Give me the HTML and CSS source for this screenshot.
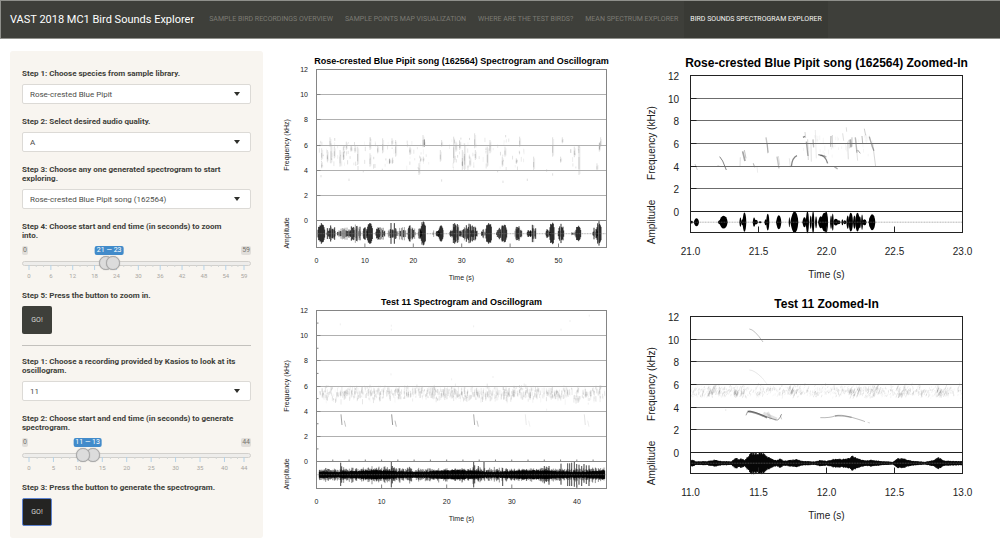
FILE: index.html
```html
<!DOCTYPE html>
<html lang="en">
<head>
<meta charset="utf-8">
<title>VAST 2018 MC1 Bird Sounds Explorer</title>
<link rel="stylesheet" href="styles.css">
</head>
<body>
<header class="navbar">
  <a class="brand" href="#">VAST 2018 MC1 Bird Sounds Explorer</a>
  <nav class="tabs">
    <a href="#">SAMPLE BIRD RECORDINGS OVERVIEW</a>
    <a href="#">SAMPLE POINTS MAP VISUALIZATION</a>
    <a href="#">WHERE ARE THE TEST BIRDS?</a>
    <a href="#">MEAN SPECTRUM EXPLORER</a>
    <a href="#" class="active">BIRD SOUNDS SPECTROGRAM EXPLORER</a>
  </nav>
</header>
<main class="layout">
  <form class="panel">
    <div class="field">
      <label for="species">Step 1: Choose species from sample library.</label>
      <div class="select"><select id="species"><option>Rose-crested Blue Pipit</option></select></div>
    </div>
    <div class="field">
      <label for="quality">Step 2: Select desired audio quality.</label>
      <div class="select"><select id="quality"><option>A</option></select></div>
    </div>
    <div class="field">
      <label for="song">Step 3: Choose any one generated spectrogram to start exploring.</label>
      <div class="select"><select id="song"><option>Rose-crested Blue Pipit song (162564)</option></select></div>
    </div>
    <div class="field">
      <label for="zoom-start">Step 4: Choose start and end time (in seconds) to zoom<br>into.</label>
      <div class="slider" data-max="59" data-step="6">
        <div class="chips"><span class="chip">0</span><output class="value">21 — 23</output><span class="chip">59</span></div>
        <div class="track"></div>
        <svg class="scale" aria-hidden="true"></svg>
        <input id="zoom-start" type="range" min="0" max="59" value="21">
        <input aria-label="End time" type="range" min="0" max="59" value="23">
      </div>
    </div>
    <div class="field">
      <label for="go-zoom">Step 5: Press the button to zoom in.</label>
      <button id="go-zoom" class="go" type="button">GO!</button>
    </div>
    <hr>
    <div class="field">
      <label for="recording">Step 1: Choose a recording provided by Kasios to look at its oscillogram.</label>
      <div class="select"><select id="recording"><option>11</option></select></div>
    </div>
    <div class="field">
      <label for="test-start">Step 2: Choose start and end time (in seconds) to generate spectrogram.</label>
      <div class="slider start-on-top" data-max="44" data-step="5">
        <div class="chips"><span class="chip">0</span><output class="value">11 — 13</output><span class="chip">44</span></div>
        <div class="track"></div>
        <svg class="scale" aria-hidden="true"></svg>
        <input id="test-start" type="range" min="0" max="44" value="11">
        <input aria-label="End time" type="range" min="0" max="44" value="13">
      </div>
    </div>
    <div class="field">
      <label for="go-test">Step 3: Press the button to generate the spectrogram.</label>
      <button id="go-test" class="go pressed" type="button">GO!</button>
    </div>
  </form>
  <section class="charts">
    <svg id="song-full" class="chart small" viewBox="0 0 360 241"></svg>
    <svg id="song-zoom" class="chart large" viewBox="0 0 360 241"></svg>
    <svg id="test-full" class="chart small" viewBox="0 0 360 241"></svg>
    <svg id="test-zoom" class="chart large" viewBox="0 0 360 241"></svg>
  </section>
</main>
<script src="charts.js"></script>
</body>
</html>
```

FILE: styles.css
```css
* { box-sizing: border-box; }

body {
  margin: 0;
  background: #fff;
  color: #3e3f3a;
  font-family: Roboto, "Liberation Sans", sans-serif;
  font-size: 8px;
  line-height: 9px;
}

.navbar {
  display: flex;
  height: 39px;
  padding-left: 9px;
  background: #3e3f3a;
  border: 1px solid #8f908b;
  border-right: 0;
}

.navbar a {
  display: flex;
  align-items: center;
  color: #7c7b74;
  text-decoration: none;
  white-space: nowrap;
}

.navbar .brand {
  margin-right: 9px;
  color: #fff;
  font-size: 11px;
}

.tabs { display: flex; font-size: 7px; }
.tabs a { padding: 0 6px; }
.tabs .active { background: #393a35; color: #f4f4f2; }

.layout {
  display: grid;
  grid-template-columns: 253fr 720fr;
  align-items: start;
  gap: 12px;
  padding: 12px 5px 0 10px;
}

.panel {
  padding: 18px 12px 12px;
  background: #f8f5f0;
  border-radius: 3px;
}

.field + .field { margin-top: 13px; }
.field label { display: block; margin-bottom: 6px; font-weight: 700; }

.select { display: grid; align-items: center; }
.select select, .select::after { grid-area: 1 / 1; }
.select select {
  appearance: none;
  width: 100%;
  height: 20px;
  padding: 0 8px 0 7px;
  border: 1px solid #dcdad6;
  border-radius: 2px;
  background: #fff;
  color: #4c4d49;
  font: 400 8px Roboto, sans-serif;
}
.select::after {
  content: "";
  justify-self: end;
  width: 6px;
  height: 4px;
  margin-right: 11px;
  background: #2e2f2b;
  clip-path: polygon(0 0, 100% 0, 50% 100%);
  pointer-events: none;
}

.slider {
  display: grid;
  grid-template-rows: 10px 14px 8px;
  grid-template-columns: 1fr;
}
.chips {
  position: relative;
  display: flex;
  justify-content: space-between;
  align-items: start;
  font-size: 7px;
}
.chip {
  height: 9px;
  padding: 0 1px;
  border-radius: 2px;
  background: #e1deda;
  color: #77756f;
}
.value {
  position: absolute;
  top: 0;
  height: 9px;
  padding: 0 2px;
  border-radius: 2px;
  background: #428bca;
  color: #fff;
  transform: translateX(-50%);
  white-space: nowrap;
}
.track {
  grid-area: 2 / 1;
  align-self: center;
  height: 5px;
  border: 1px solid #d2d0cc;
  border-radius: 3px;
  background: #eeedeb;
}
.scale {
  grid-area: 2 / 1 / 4 / 2;
  width: calc(100% - 14px);
  height: 22px;
  margin-left: 7px;
  overflow: visible;
}
.scale text { fill: #a8a6a1; font-size: 6px; text-anchor: middle; }
.scale .major { stroke: #b4d2e8; }
.scale .minor { stroke: #d2d6d6; }

.slider input {
  grid-area: 2 / 1;
  appearance: none;
  width: 100%;
  height: 14px;
  margin: 0;
  background: none;
  pointer-events: none;
}
.slider input::-webkit-slider-thumb {
  appearance: none;
  width: 14px;
  height: 14px;
  border: 1px solid #aaa;
  border-radius: 50%;
  background: #dcdcdc;
  box-shadow: 0 0 1px #999;
  pointer-events: auto;
}
.start-on-top input:first-of-type { z-index: 1; }

.go {
  display: block;
  width: 30px;
  height: 28px;
  padding: 0;
  border: 0;
  border-radius: 2px;
  background: #3e3f3a;
  color: #d8d8d6;
  font: 400 7px Roboto, sans-serif;
}
.go.pressed { background: #242422; border: 1px solid #5e83cf; }

.panel hr {
  height: 1px;
  margin: 11px 0;
  border: 0;
  background: #c3c1bd;
}

.charts { display: grid; grid-template-columns: 1fr 1fr; }

.chart {
  display: block;
  width: 100%;
  font-family: "Liberation Sans", Arial, sans-serif;
}
.chart text { text-anchor: middle; fill: #222; }
.chart .ylabel { text-anchor: end; }
.chart .title { font-weight: 700; fill: #000; }
.chart .frame { fill: none; }
.small { font-size: 7px; }
.small .title { font-size: 9px; }
.small .frame, .small .tick { stroke: #858585; }
.small .grid { stroke: #b0b0b0; }
.large { font-size: 10px; }
.large .title { font-size: 12px; }
.large .frame, .large .tick { stroke: #222; }
.large .grid { stroke: #6c6c6c; }
.wave { fill: none; stroke: #000; }
.envelope { fill: #000; }
.center { stroke: #777; stroke-width: 0.6; stroke-dasharray: 1 0.6; }
.marks { fill: none; stroke: #333; stroke-width: 2.4; }
```

FILE: charts.js
```js
function random(seed) {
  return function () {
    seed = (seed * 1664525 + 1013904223) % 4294967296;
    return seed / 4294967296;
  };
}

document.querySelectorAll('.slider').forEach(function (slider) {
  var max = +slider.dataset.max, step = +slider.dataset.step, out = '';
  function pct(v) { return (v / max * 100).toFixed(2) + '%'; }
  function tick(v, cls, end) {
    return '<line class="' + cls + '" x1="' + pct(v) + '" x2="' + pct(v) + '" y1="9" y2="' + end + '"/>';
  }
  function major(v) {
    out += tick(v, 'major', 14) + '<text x="' + pct(v) + '" y="22">' + v + '</text>';
  }
  for (var v = 0; v < max; v += step) {
    major(v);
    var next = Math.min(step, max - v);
    out += tick(v + next / 3, 'minor', 11) + tick(v + next * 2 / 3, 'minor', 11);
  }
  major(max);
  slider.querySelector('.scale').innerHTML = out;
  var inputs = slider.querySelectorAll('input');
  var f = (+inputs[0].value + +inputs[1].value) / 2 / max;
  slider.querySelector('.value').style.left = 'calc(7px + (100% - 14px) * ' + f.toFixed(4) + ')';
});

function line(cls, x1, y1, x2, y2) {
  return '<line class="' + cls + '" x1="' + x1 + '" y1="' + y1 + '" x2="' + x2 + '" y2="' + y2 + '"/>';
}
function text(cls, x, y, s, rotate) {
  return '<text class="' + cls + '" x="' + x + '" y="' + y + '"' +
    (rotate ? ' transform="rotate(-90 ' + x + ' ' + y + ')"' : '') + '>' + s + '</text>';
}

var small = { l: 41.5, r: 331.5, t: 18.5, zero: 169.5, b: 196.5, mid: 182.7, lx: 33, lh: 2.5,
  ax: 14, fy: 94, ay: 182, xy: 212, ty: 229, cx: 186.5, titleY: 13, tick: 4 };
var large = { l: 55.5, r: 327.5, t: 24.5, zero: 160.5, b: 181.5, mid: 171.2, lx: 44, lh: 4,
  ax: 20, fy: 92, ay: 171, xy: 204, ty: 227, cx: 191.5, titleY: 16, tick: 6 };

function draw(id, g, title, xTicks, content, minor) {
  var out = content, k, y;
  out += text('title', g.cx, g.titleY, title);
  for (k = 0; k <= 12; k += 2) {
    y = Math.round(g.zero - (g.zero - g.t) * k / 12 - 0.5) + 0.5;
    out += text('ylabel', g.lx, y + g.lh, k);
    if (k > 0 && k < 12) out += line('grid', g.l, y, g.r, y);
    out += line('tick', g.l, y, g.l + g.tick, y);
  }
  out += line('tick', g.l, g.zero, g.r, g.zero);
  out += line('center', g.l, g.mid, g.r, g.mid);
  out += '<rect class="frame" x="' + g.l + '" y="' + g.t + '" width="' + (g.r - g.l) + '" height="' + (g.b - g.t) + '"/>';
  xTicks.forEach(function (t) {
    out += line('tick', t[0], g.b, t[0], g.b - g.tick);
    out += text('', t[0], g.xy, t[1]);
  });
  if (minor) {
    for (k = 1; k < 12; k += 2) {
      y = g.zero - (g.zero - g.t) * k / 12;
      out += line('tick', g.l, y, g.l + 2, y);
    }
    for (k = 1; k < 18; k++) out += line('tick', g.l + k * 16.27, g.zero, g.l + k * 16.27, g.zero - 2);
  }
  out += text('', g.ax, g.fy, 'Frequency (kHz)', true);
  out += text('', g.ax, g.ay, 'Amplitude', true);
  out += text('', g.cx, g.ty, 'Time (s)');
  document.getElementById(id).innerHTML = out;
}

// Spectrogram marks and burst tables use thirds of a unit.
function marks(dy, body) {
  return '<g class="marks" transform="translate(0 ' + dy + ') scale(0.3333)">' + body + '</g>';
}
function stroke(d, opacity, width) {
  return '<path d="' + d + '" opacity="' + opacity + '"' + (width ? ' stroke-width="' + width + '"' : '') + '/>';
}
function dash(x, y0, y1, opacity) {
  return stroke('M' + x.toFixed(1) + ' ' + y0.toFixed(1) + 'V' + y1.toFixed(1), opacity);
}
function wave(d, width, opacity) {
  return '<path class="wave" stroke-width="' + width + '" opacity="' + opacity + '" d="' + d + '"/>';
}
function bar(x, mid, up, down) {
  return 'M' + x.toFixed(2) + ' ' + (mid - up).toFixed(2) + 'V' + (mid + down).toFixed(2);
}

// Full pipit song
(function () {
  var r = random(7), d = '', soft = '', body = '';
  [[129, 149, 32, 1], [155, 182, 30, .7], [188, 225, 24, .4], [225, 258, 34, .45], [264, 278, 20, .5],
    [276, 292, 36, 1], [303, 330, 25, .5], [340, 366, 36, .55], [372, 392, 28, .2], [397, 422, 27, .4],
    [430, 440, 20, .6], [437, 452, 38, 1], [474, 477, 20, .3], [484, 494, 12, .5], [491, 505, 25, .9],
    [525, 558, 38, .8], [558, 607, 30, .6], [620, 632, 16, .4], [633, 650, 37, 1], [665, 678, 18, .5],
    [677, 695, 30, .9], [720, 740, 25, .7], [757, 768, 17, .4], [766, 783, 33, .8], [812, 826, 16, .4],
    [825, 838, 37, 1], [850, 866, 30, .7], [890, 902, 10, .4], [903, 917, 26, 1], [953, 968, 20, .7],
    [966, 978, 38, .9]].forEach(function (b) {
    for (var x = b[0]; x <= b[1]; x += 2) {
      var shape = Math.pow(Math.sin(Math.PI * (x - b[0] + 1) / (b[1] - b[0] + 2)), 0.4);
      var a = b[2] / 3 * shape * (b[3] > .85 ? .75 + .25 * r() : .25 + .75 * r());
      if (r() < b[3]) d += bar(x / 3, small.mid, a, a * .95);
      else soft += bar(x / 3, small.mid, a * .9, a * .9);
    }
  });
  [[157, 300, 335], [165, 262, 290], [168, 280, 340], [178, 290, 325], [140, 295, 330], [140, 340, 355],
    [205, 290, 330], [214, 275, 300], [228, 285, 305], [240, 285, 308], [248, 290, 345], [195, 300, 350],
    [285, 262, 300], [285, 310, 350], [308, 285, 310], [323, 265, 310], [344, 325, 342], [352, 325, 342],
    [362, 270, 320], [351, 265, 285], [405, 290, 315], [444, 255, 292], [448, 270, 290], [437, 320, 335],
    [445, 320, 335], [432, 340, 375], [496, 300, 335], [500, 270, 290], [536, 260, 340], [543, 275, 305],
    [554, 270, 300], [562, 300, 360], [569, 280, 360], [585, 320, 350], [599, 250, 295], [601, 300, 330],
    [637, 290, 350], [645, 270, 310], [690, 290, 320], [682, 320, 350], [724, 325, 342], [734, 260, 290],
    [776, 320, 360], [833, 262, 320], [862, 262, 280], [857, 320, 338], [898, 290, 320], [912, 285, 375],
    [966, 340, 362], [973, 278, 305], [977, 262, 290]].forEach(function (m) {
    body += dash(m[0], m[1], m[2], 0.2);
    body += dash(m[0], m[1] + (m[2] - m[1]) * .4, m[1] + (m[2] - m[1]) * .8, 0.2);
    body += dash(m[0] + 3, m[1] + 5, m[2] - 3, 0.1);
  });
  body += dash(448, 268, 290, .6) + dash(344, 327, 340, .3) + dash(974, 278, 298, .3);
  [150, 170, 210, 235, 285, 345, 410, 445, 540, 570, 595, 640, 685, 730, 900].forEach(function (c) {
    for (var i = 0; i < 10; i++) {
      var x = c + (r() - .5) * 36, y = 262 + r() * 90;
      body += dash(x, y, y + 4 + r() * 12, (.05 + r() * .16).toFixed(2));
    }
  });
  [[138, 375], [265, 360], [322, 356], [222, 386], [500, 388], [684, 392], [757, 386], [833, 370], [668, 360], [815, 358], [692, 255]].forEach(function (p) {
    body += dash(p[0], p[1], p[1] + 7, .2);
  });
  var ticks = [0, 1, 2, 3, 4, 5].map(function (i) { return [small.l + i * 48.4, i * 10]; });
  draw('song-full', small, 'Rose-crested Blue Pipit song (162564) Spectrogram and Oscillogram', ticks,
    marks(-1, body) + wave(soft, .6, .6) + wave(d, .8, 1));
})();

// Full test recording
(function () {
  var r = random(21), core = '', spikes = '', body = '', x, a;
  for (x = 133; x < 990; x += 1) {
    a = (8 + 4 * r() + 2 * Math.sin(x / 38)) / 3;
    core += bar(x / 3, small.mid, a, a);
    if (r() < .5) {
      a = (13 + 11 * r() * r() + (x > 230 && x < 420 ? 4 * r() : 0)) / 3;
      spikes += bar(x / 3, small.mid, a, a * (.7 + .5 * r()));
    }
  }
  [[197, 36, 34], [200, 25, 24], [349, 38, 38], [352, 26, 26], [596, 38, 38], [599, 28, 26], [610, 26, 20],
    [627, 40, 12], [683, 20, 34], [808, 26, 26], [814, 24, 22], [822, 26, 30], [858, 33, 30], [878, 34, 34],
    [884, 34, 34], [890, 36, 34], [898, 38, 36], [905, 32, 38], [912, 30, 30], [920, 26, 34],
    [927, 32, 24], [934, 28, 28], [942, 28, 34]].forEach(function (s) {
    spikes += bar(s[0] / 3, small.mid, s[1] / 3, s[2] / 3);
    spikes += bar(s[0] / 3, small.mid, s[1] / 3, s[2] / 3);
  });
  for (var i = 0; i < 750; i++) {
    x = 132 + r() * 858;
    var y = 280 + (r() + r()) * 25;
    body += dash(x, y, y + 5 + r() * 12, (.04 + r() * .15).toFixed(2));
  }
  for (i = 0; i < 70; i++) {
    x = 200 + r() * 740;
    a = 288 + r() * 18;
    body += dash(x, a, a + 20, .14);
  }
  [[198, .8], [350, .9], [596, .75], [751, .2], [928, .25]].forEach(function (m) {
    body += stroke('M' + m[0] + ' 373l3 32', m[1] * .7);
    body += stroke('M' + (m[0] + 10) + ' 392l4 18', m[1] * .45);
  });
  [[196, 100], [349, 104], [349, 116], [596, 106], [348, 250], [885, 90], [858, 116], [943, 74], [530, 265], [654, 258], [815, 356], [940, 338]].forEach(function (p) {
    body += dash(p[0], p[1], p[1] + 6, .1);
  });
  var ticks = [0, 1, 2, 3, 4].map(function (k) { return [small.l + k * 65.1, k * 10]; });
  draw('test-full', small, 'Test 11 Spectrogram and Oscillogram', ticks,
    marks(-2, body) + wave(spikes, .5, .85) + wave(core, .8, 1), true);
})();

// Zoomed pipit song
(function () {
  var out = '', body = '', r = random(5);
  [[170, 4, 4], [184, 8, 12], [254, 6, 6], [265, 13, 19], [316, 3, 14], [322, 4, 9], [328, 6, 29], [357, 4, 14], [362, 7, 7],
    [375, 5, 3], [392, 4, 9], [398, 5, 25], [431, 8, 21], [463, 2, 15], [478, 12, 32], [508, 6, 15],
    [517, 5, 33], [527, 3, 20], [534, 4, 33], [543, 3, 18], [557, 8, 18], [568, 11, 28], [573, 6, 33],
    [588, 3, 20], [593, 3, 26], [602, 8, 10], [611, 6, 6], [622, 3, 9], [629, 5, 6], [638, 4, 20],
    [647, 7, 28], [658, 4, 20], [667, 7, 28], [674, 4, 18], [681, 3, 23], [688, 7, 9], [706, 5, 16],
    [711, 10, 24]].forEach(function (b) {
    var x = b[0] / 3, w = b[1] / 3, h = b[2] / 3, m = large.mid;
    out += '<path class="envelope" d="M' + (x - w) + ' ' + m + 'Q' + (x - w * .5) + ' ' + (m - h) + ' ' + x + ' ' + (m - h) +
      'Q' + (x + w * .8) + ' ' + (m - h) + ' ' + (x + w) + ' ' + m + 'Q' + (x + w * .8) + ' ' + (m + h) + ' ' + x + ' ' + (m + h) +
      'Q' + (x - w * .5) + ' ' + (m + h) + ' ' + (x - w) + ' ' + m + 'Z"/>';
  });
  [['M254 320L263 333L274 360', .6, 3], ['M180 342L187 360', .3], ['M247 347h6', .2], ['M323 304L330 333', .45, 5],
    ['M328 300L333 325', .3, 3], ['M316 322L315 350', .2], ['M355 340L359 352', .4, 3], ['M366 350l2 18', .12],
    ['M393 262L400 308', .28, 4], ['M397 280L398 310', .2, 3], ['M426 320L432 355', .3, 4], ['M430 318L434 345', .2],
    ['M469 350Q472 322 486 317', .6, 4], ['M463 325L466 352', .15], ['M504 262l6 -3', .6, 4], ['M510 246l2 18', .25],
    ['M514 275L519 318', .4, 4], ['M518 268L520 330', .2, 3], ['M528 280L529 335', .16, 3], ['M534 268L536 292', .3, 4],
    ['M541 240L544 325', .12], ['M550 314Q572 316 578 340', .6, 4], ['M556 317Q566 314 574 322', .4, 4],
    ['M588 258L587 290', .3, 4], ['M592 255L593 292', .2, 3], ['M598 350L608 357', .4, 4], ['M623 250L626 272', .2],
    ['M634 232L635 245', .2], ['M638 275L640 328', .18, 3], ['M646 268L648 292', .4, 5], ['M651 262L651 290', .3, 3],
    ['M642 270L643 295', .25], ['M661 262L666 308', .35, 4], ['M668 300L676 310', .45, 3], ['M665 300L668 332', .15, 3],
    ['M681 258L683 280', .35, 3], ['M688 236L692 256', .25, 3], ['M703 260L712 290L717 302', .4, 4],
    ['M713 280L722 350', .2, 3]].forEach(function (m) { body += stroke(m[0], m[1], m[2]); });
  for (var i = 0; i < 40; i++) {
    var x = 505 + r() * 212, y = 250 + r() * 65;
    body += dash(x, y, y + 6 + r() * 14, .06);
  }
  draw('song-zoom', large, 'Rose-crested Blue Pipit song (162564) Zoomed-In', halfSeconds(21), marks(-1, body) + out);
})();

function halfSeconds(start) {
  return [0, 1, 2, 3, 4].map(function (i) { return [large.l + i * 68, (start + i / 2).toFixed(1)]; });
}

// Zoomed test recording
(function () {
  var r = random(33), body = '', d = '', i, x, y, k = 0;
  var env = [[167, 10], [175, 10], [182, 5], [215, 6], [240, 11], [262, 6], [290, 6], [303, 17], [312, 11], [318, 14], [330, 10],
    [342, 25], [350, 32], [382, 32], [395, 22], [410, 14], [425, 9], [438, 15], [445, 7], [485, 12], [500, 7],
    [540, 5], [556, 10], [575, 7], [600, 14], [620, 12], [640, 15], [652, 22], [668, 15], [690, 8],
    [710, 10], [740, 6], [775, 4], [788, 15], [805, 14], [830, 7], [870, 4], [895, 9], [912, 18],
    [925, 9], [945, 7], [983, 6]];
  for (x = 167; x < 983; x += 1.5) {
    while (x > env[k + 1][0]) k++;
    var t = (x - env[k][0]) / (env[k + 1][0] - env[k][0]);
    var a = (env[k][1] * (1 - t) + env[k + 1][1] * t) * (.75 + .3 * r()) / 3;
    d += bar(x / 3, large.mid, a, a);
  }
  for (i = 0; i < 800; i++) {
    x = 168 + r() * 812;
    y = 286 + (r() + r()) * 21;
    body += stroke('M' + x.toFixed(1) + ' ' + y.toFixed(1) + 'l' + (r() * 5 - 1).toFixed(1) + ' ' + (-4 - r() * 6).toFixed(1), (.03 + r() * .12).toFixed(2));
  }
  [235, 312, 470, 655, 715, 800, 920].forEach(function (c) {
    for (i = 0; i < 16; i++) {
      x = c + (r() - .5) * 36;
      y = 298 + r() * 28;
      body += stroke('M' + x.toFixed(1) + ' ' + y.toFixed(1) + 'l5 -14', .15);
    }
  });
  [['M343 117Q358 118 384 156', .3, 3], ['M343 240Q358 240 382 264', .15], ['M382 264l14 18', .1],
    ['M333 376Q336 362 345 363Q362 366 384 376T425 390Q432 392 440 372', .45, 3],
    ['M338 364Q362 366 396 383', .6, 5], ['M385 370L425 388', .14, 11], ['M398 366L408 388', .12, 8],
    ['M436 376l4 12', .25, 3], ['M556 383Q585 384 600 378T650 382T690 395', .35, 3],
    ['M600 378Q620 376 650 382', .35, 4], ['M698 397l7 2', .2, 3], ['M270 360h4', .2]].forEach(function (m) {
    body += stroke(m[0], m[1], m[2]);
  });
  draw('test-zoom', large, 'Test 11 Zoomed-In', halfSeconds(11), marks(-2, body) + wave(d, 1, 1));
})();
```
